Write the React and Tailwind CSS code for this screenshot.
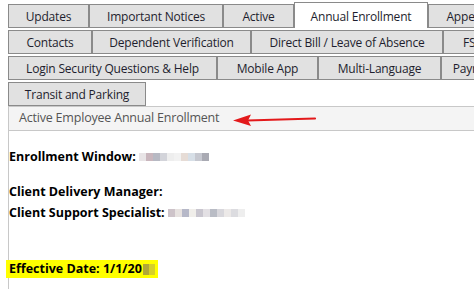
import React from 'react';

const ROWS = [
  [
    { label: 'Updates', w: 81 },
    { label: 'Important Notices', w: 134 },
    { label: 'Active', w: 71 },
    { label: 'Annual Enrollment', w: 134, active: true },
    { label: 'Appeals', w: 80 },
  ],
  [
    { label: 'Contacts', w: 84 },
    { label: 'Dependent Verification', w: 159 },
    { label: 'Direct Bill / Leave of Absence', w: 192 },
    { label: 'FSA', w: 60 },
  ],
  [
    { label: 'Login Security Questions & Help', w: 209 },
    { label: 'Mobile App', w: 101 },
    { label: 'Multi-Language', w: 123 },
    { label: 'Payroll', w: 60 },
  ],
  [{ label: 'Transit and Parking', w: 138 }],
];

// pixelated "redacted" blocks
function Blur({ cells }) {
  return (
    <span className="inline-flex items-center ml-[3px] align-middle">
      {cells.map((c, i) => (
        <span key={i} className="inline-block h-[8px] w-[7px]" style={{ background: c }} />
      ))}
    </span>
  );
}

function Tab({ label, w, active }) {
  return (
    <div
      style={{ width: w }}
      className={`shrink-0 flex items-center justify-center border border-[#8a8a8a] whitespace-nowrap overflow-hidden pt-[1px] ${
        active ? 'bg-white h-[26px] -mt-[2px] border-b-0 pt-[2px]' : 'bg-[#e1e1e1] h-[24px]'
      }`}
    >
      {label}
    </div>
  );
}

export default function App() {
  return (
    <div
      className="w-[474px] h-[289px] overflow-hidden bg-white relative"
      style={{ fontFamily: '"Open Sans", "Noto Sans", sans-serif' }}
    >
      {/* tab rows */}
      <div className="pl-[8px] pt-[4px] flex flex-col gap-[2px] text-[12px] text-[#1e1e2e] tracking-[-0.2px]">
        {ROWS.map((row, r) => (
          <div key={r} className="flex h-[24px] items-start">
            {row.map((t) => (
              <Tab key={t.label} {...t} />
            ))}
          </div>
        ))}
      </div>

      {/* panel */}
      <div className="ml-[8px] border-l border-t border-[#c8c8c8] h-[200px]">
        <div className="relative h-[24px] bg-[#f4f4f4] border-b border-[#c8c8c8] pl-[10px] flex items-center text-[12.5px] text-[#555] tracking-[-0.2px]">
          Active Employee Annual Enrollment
          <svg className="absolute left-[224px] top-[5px]" width="84" height="16" viewBox="0 0 84 16">
            <path d="M14 8.5 L82 6.5" stroke="#e3191b" strokeWidth="2.2" strokeLinecap="round" />
            <polygon points="0,8.5 18,2.5 15,8.4 18,14" fill="#e3191b" />
          </svg>
        </div>

        <div className="text-[12.5px] font-bold text-black leading-[18px]">
          <div className="mt-[17px] flex items-center">
            Enrollment Window:
            <Blur cells={['#e8e4e6', '#c9b6bd', '#b7b9c3', '#d3d4da', '#eeeeee', '#f2f2f2', '#e6dcd6', '#d7dfe7', '#c6c8d0', '#a9aab3']} />
          </div>
          <div className="mt-[17px]">Client Delivery Manager:</div>
          <div className="mt-[3px] flex items-center">
            Client Support Specialist:
            <Blur cells={['#cdc3c9', '#e7e2e0', '#b6b8c8', '#f0eeea', '#c9c6cf', '#e3e0e4', '#b9bcc5', '#d8d7dc', '#ece9e8', '#dcdce0', '#eeeeee']} />
          </div>
          <div className="mt-[38px] -ml-[3px] w-[152px] h-[18px] bg-[#ffff00] pl-[3px] flex items-center">
            Effective Date: 1/1/20
            <span className="inline-flex ml-[1px]">
              <span className="inline-block w-[6px] h-[11px] bg-[#b0a838]" />
              <span className="inline-block w-[6px] h-[11px] bg-[#d6d02a]" />
            </span>
          </div>
        </div>
      </div>
    </div>
  );
}
